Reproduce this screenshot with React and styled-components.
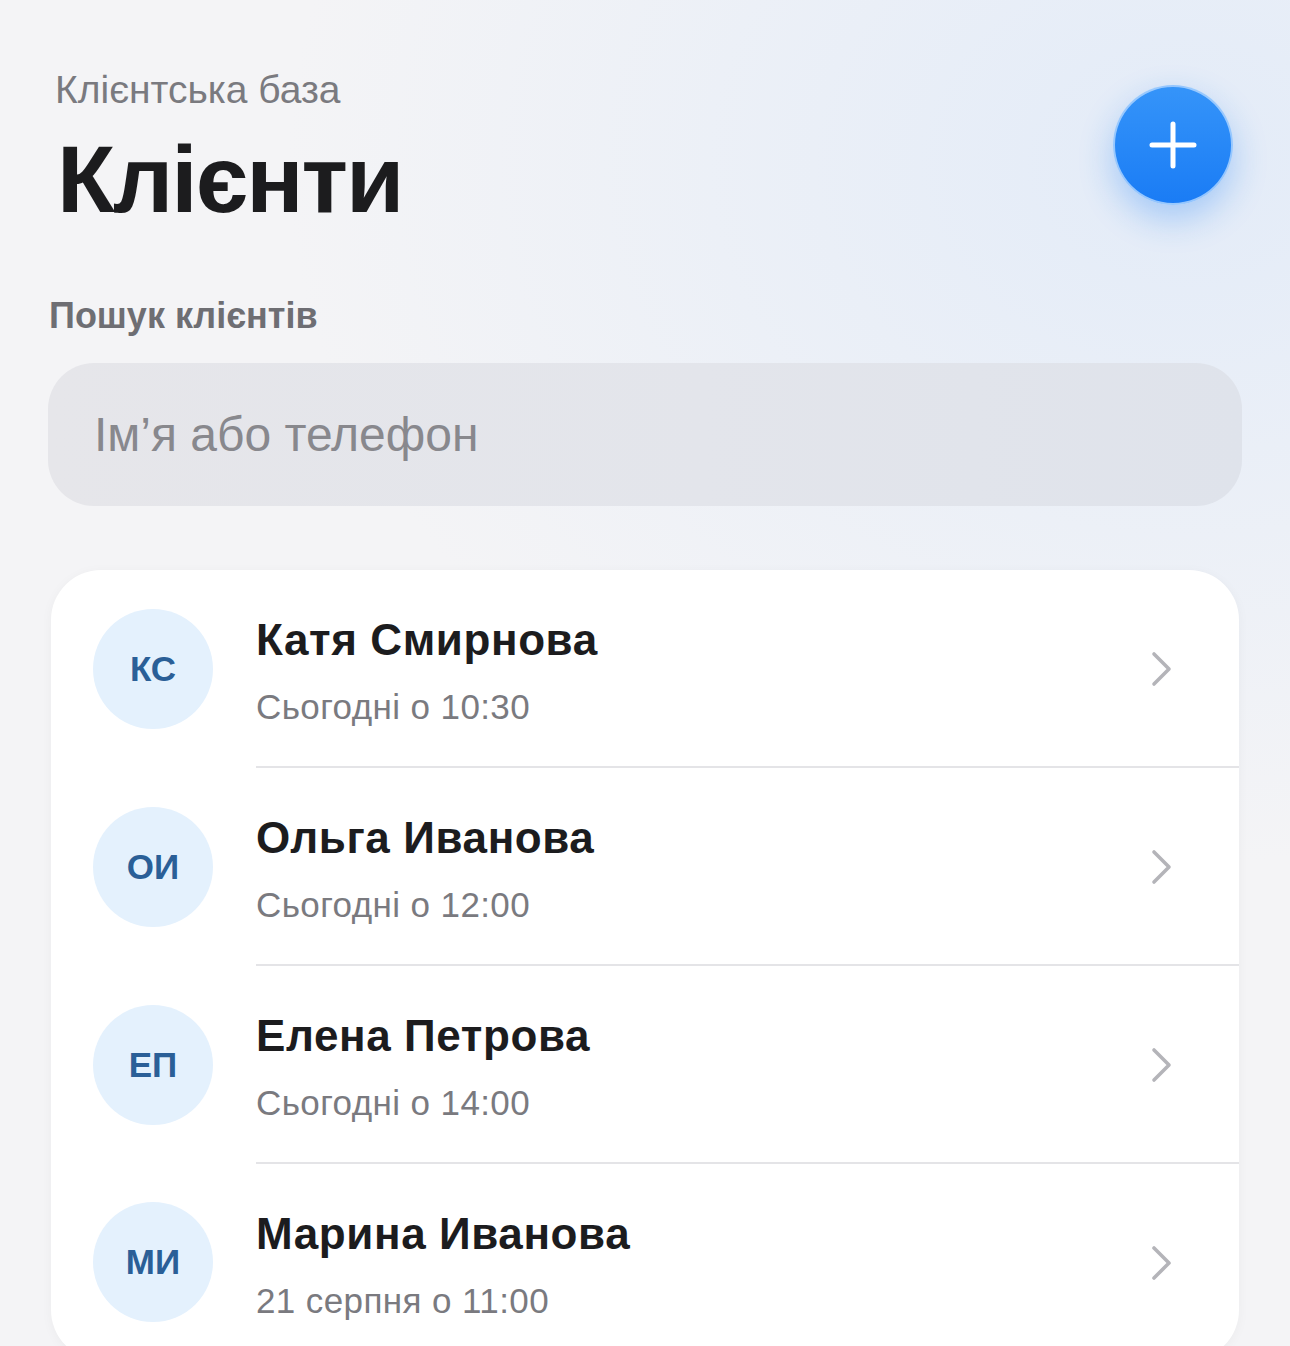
import React from "react"
import styled, { createGlobalStyle } from "styled-components"

const GlobalStyle = createGlobalStyle`
  html, body {
    margin: 0;
    padding: 0;
  }
  body {
    font-family: "Liberation Sans", Arial, sans-serif;
    background: #f4f4f6;
  }
`

const Page = styled.div`
  min-height: 1346px;
  box-sizing: border-box;
  padding: 68px 48px 0 48px;
  background:
    radial-gradient(ellipse 900px 700px at 92% 12%, rgba(226, 235, 248, 0.95), rgba(226, 235, 248, 0) 100%),
    #f4f4f6;
`

const Header = styled.header`
  display: flex;
  justify-content: space-between;
  align-items: flex-start;
  padding: 0 9px 0 7px;
`

const Eyebrow = styled.div`
  font-size: 39px;
  line-height: 44px;
  color: #7a7a7f;
`

const Title = styled.h1`
  margin: 14px 0 0 2px;
  font-size: 95px;
  line-height: 107px;
  font-weight: 700;
  letter-spacing: -2px;
  color: #1c1c1e;
`

const AddButton = styled.button`
  margin-top: 17px;
  width: 120px;
  height: 120px;
  border-radius: 50%;
  border: 2px solid rgba(170, 210, 255, 0.85);
  background: linear-gradient(180deg, #3594f9 0%, #1a7cf5 100%);
  box-shadow: 0 14px 34px rgba(30, 128, 245, 0.32);
  display: flex;
  align-items: center;
  justify-content: center;
  padding: 0;
  cursor: pointer;
`

const SearchLabel = styled.div`
  margin-top: 62px;
  font-size: 36px;
  line-height: 42px;
  font-weight: 700;
  color: #6e6e73;
  padding-left: 1px;
`

const SearchInput = styled.input`
  display: block;
  box-sizing: border-box;
  width: 100%;
  height: 143px;
  margin-top: 26px;
  border: none;
  outline: none;
  border-radius: 46px;
  padding: 0 46px;
  font-family: "Liberation Sans", Arial, sans-serif;
  font-size: 48px;
  color: #1c1c1e;
  background: linear-gradient(90deg, #e6e6ea 0%, #e3e5eb 55%, #dfe3eb 100%);

  &::placeholder {
    color: #88888d;
  }
`

const Card = styled.ul`
  list-style: none;
  margin: 64px 3px 0 3px;
  padding: 0;
  background: #ffffff;
  border-radius: 50px;
  box-shadow: 0 2px 12px rgba(0, 0, 0, 0.04);
  overflow: hidden;
`

const Row = styled.li`
  display: flex;
  align-items: center;
`

const Avatar = styled.div`
  flex: none;
  width: 120px;
  height: 120px;
  margin: 0 43px 0 42px;
  border-radius: 50%;
  background: #e4f1fd;
  color: #2a5f97;
  font-size: 35px;
  font-weight: 700;
  display: flex;
  align-items: center;
  justify-content: center;
`

const Body = styled.div`
  flex: 1;
  display: flex;
  align-items: center;
  padding: 39px 66px 37px 0;
  border-bottom: ${p => (p.$last ? "none" : "2px solid #e4e4e7")};
`

const Info = styled.div`
  flex: 1;
  height: 120px;
`

const Name = styled.div`
  margin-top: 7px;
  font-size: 44px;
  line-height: 48px;
  font-weight: 700;
  letter-spacing: 0.6px;
  color: #1c1c1e;
`

const When = styled.div`
  margin-top: 22px;
  font-size: 35px;
  line-height: 42px;
  letter-spacing: 0.4px;
  color: #7a7a7f;
`

const PlusIcon = () => (
  <svg width="48" height="48" viewBox="0 0 48 48" fill="none">
    <path d="M24 3v42M3 24h42" stroke="#fff" strokeWidth="5" strokeLinecap="round" />
  </svg>
)

const Chevron = () => (
  <svg width="22" height="36" viewBox="0 0 22 36" fill="none">
    <path d="M3 3l15 15L3 33" stroke="#b4b4b9" strokeWidth="3.6" strokeLinecap="round" strokeLinejoin="round" />
  </svg>
)

const clients = [
  { initials: "КС", name: "Катя Смирнова", when: "Сьогодні о 10:30" },
  { initials: "ОИ", name: "Ольга Иванова", when: "Сьогодні о 12:00" },
  { initials: "ЕП", name: "Елена Петрова", when: "Сьогодні о 14:00" },
  { initials: "МИ", name: "Марина Иванова", when: "21 серпня о 11:00" },
]

const App = () => {
  return (
    <Page>
      <GlobalStyle />
      <Header>
        <div>
          <Eyebrow>Клієнтська база</Eyebrow>
          <Title>Клієнти</Title>
        </div>
        <AddButton aria-label="Додати клієнта">
          <PlusIcon />
        </AddButton>
      </Header>

      <SearchLabel>Пошук клієнтів</SearchLabel>
      <SearchInput placeholder="Ім’я або телефон" />

      <Card>
        {clients.map((c, i) => (
          <Row key={c.initials}>
            <Avatar>{c.initials}</Avatar>
            <Body $last={i === clients.length - 1}>
              <Info>
                <Name>{c.name}</Name>
                <When>{c.when}</When>
              </Info>
              <Chevron />
            </Body>
          </Row>
        ))}
      </Card>
    </Page>
  )
}

export default App
